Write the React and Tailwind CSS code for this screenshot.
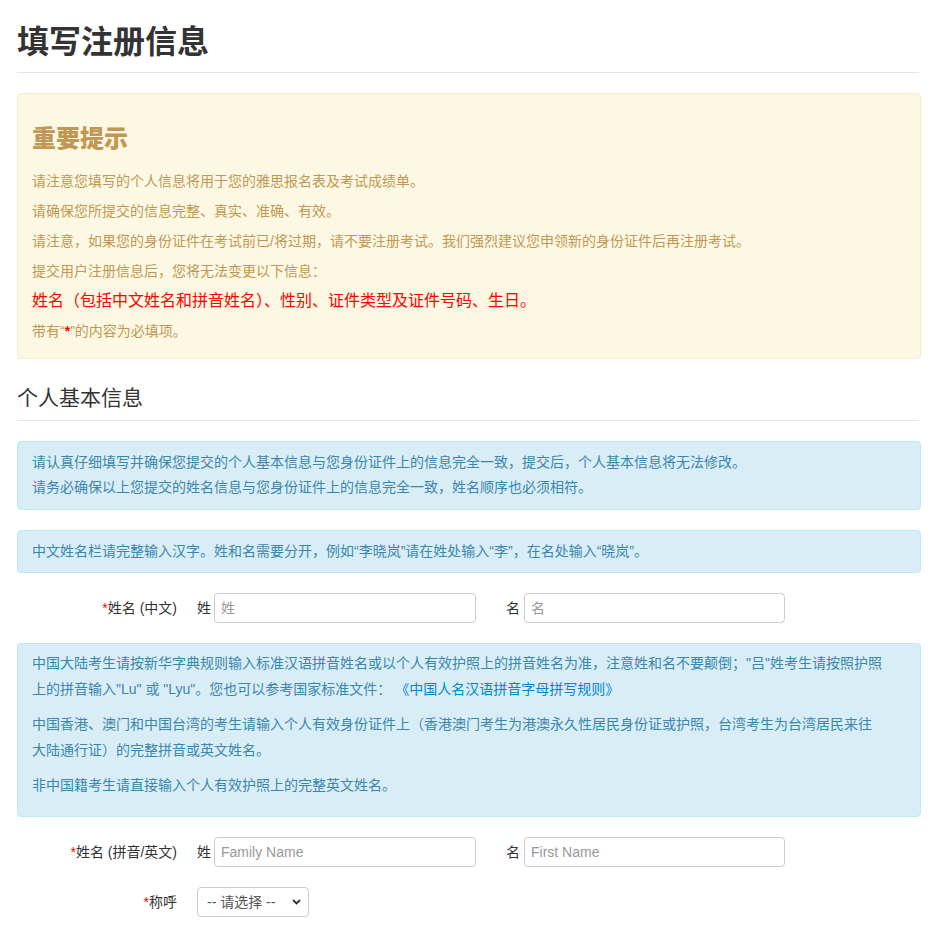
import React from "react";

const font = { fontFamily: '"Liberation Sans", "Noto Sans CJK SC", sans-serif' };

function Req() {
  return <span className="text-[#ff0000]">*</span>;
}

function NameRow({ label, family, first }) {
  return (
    <div className="flex items-center h-[30px] text-[14px] text-[#333]">
      <div className="w-[160px] text-right pr-0">
        <Req />
        {label}
      </div>
      <span className="ml-[20px] mr-[3px]">姓</span>
      <input
        className="w-[262px] h-[30px] border border-[#ccc] rounded-[4px] px-[6px] text-[14px] placeholder:text-[#999] outline-none"
        placeholder={family}
      />
      <span className="ml-[30px] mr-[4px]">名</span>
      <input
        className="w-[261px] h-[30px] border border-[#ccc] rounded-[4px] px-[6px] text-[14px] placeholder:text-[#999] outline-none"
        placeholder={first}
      />
    </div>
  );
}

export default function App() {
  return (
    <div className="min-h-screen bg-white px-[17px] pb-[20px] w-[936px]" style={font}>
      <h1 className="mt-[22px] text-[32px] leading-[40px] font-bold text-[#333] pb-[10px] border-b border-[#e5e5e5]">
        填写注册信息
      </h1>

      {/* 重要提示 */}
      <div className="mt-[20px] w-[904px] border border-[#faebcc] bg-[#fcf8e3] rounded-[4px] px-[14px] pt-[15px] pb-[7px] text-[#c09853] text-[14px]">
        <h3 className="mt-[17px] mb-[19px] text-[24px] leading-[26px] font-black">重要提示</h3>
        <p className="leading-[20px] mb-[10px]">请注意您填写的个人信息将用于您的雅思报名表及考试成绩单。</p>
        <p className="leading-[20px] mb-[10px]">请确保您所提交的信息完整、真实、准确、有效。</p>
        <p className="leading-[20px] mb-[10px]">
          请注意，如果您的身份证件在考试前已/将过期，请不要注册考试。我们强烈建议您申领新的身份证件后再注册考试。
        </p>
        <p className="leading-[20px] mb-[10px]">提交用户注册信息后，您将无法变更以下信息：</p>
        <p className="leading-[20px] mb-[10px] text-[16px] text-[#ff0000]">
          姓名（包括中文姓名和拼音姓名）、性别、证件类型及证件号码、生日。
        </p>
        <p className="leading-[20px] mb-[10px]">
          带有“<span className="text-[#ff0000] font-bold">*</span>”的内容为必填项。
        </p>
      </div>

      <h2 className="mt-[27px] text-[21px] leading-[24px] text-[#333] pb-[10px] border-b border-[#e5e5e5]">
        个人基本信息
      </h2>

      <div className="mt-[20px] w-[904px] border border-[#bce8f1] bg-[#d9edf7] rounded-[4px] pl-[14px] pr-[35px] pt-[8px] pb-[9px] text-[14px] leading-[25px] text-[#3a87ad]">
        请认真仔细填写并确保您提交的个人基本信息与您身份证件上的信息完全一致，提交后，个人基本信息将无法修改。
        <br />
        请务必确保以上您提交的姓名信息与您身份证件上的信息完全一致，姓名顺序也必须相符。
      </div>

      <div className="mt-[20px] w-[904px] border border-[#bce8f1] bg-[#d9edf7] rounded-[4px] pl-[14px] pr-[35px] pt-[8px] pb-[8px] text-[14px] leading-[25px] text-[#3a87ad]">
        中文姓名栏请完整输入汉字。姓和名需要分开，例如“李晓岚”请在姓处输入“李”，在名处输入“晓岚”。
      </div>

      <div className="mt-[20px]">
        <NameRow label="姓名 (中文)" family="姓" first="名" />
      </div>

      <div className="mt-[20px] w-[904px] border border-[#bce8f1] bg-[#d9edf7] rounded-[4px] pl-[14px] pr-[35px] pt-[6px] pb-[9px] text-[14px] leading-[26px] text-[#3a87ad]">
        <p className="mb-[9px]">
          中国大陆考生请按新华字典规则输入标准汉语拼音姓名或以个人有效护照上的拼音姓名为准，注意姓和名不要颠倒；"吕"姓考生请按照护照上的拼音输入"Lu" 或 "Lyu"。您也可以参考国家标准文件：{" "}
          <a href="#" className="text-[#0088cc]">《中国人名汉语拼音字母拼写规则》</a>
        </p>
        <p className="mb-[9px]">
          中国香港、澳门和中国台湾的考生请输入个人有效身份证件上（香港澳门考生为港澳永久性居民身份证或护照，台湾考生为台湾居民来往大陆通行证）的完整拼音或英文姓名。
        </p>
        <p className="mb-[9px]">非中国籍考生请直接输入个人有效护照上的完整英文姓名。</p>
      </div>

      <div className="mt-[20px]">
        <NameRow label="姓名 (拼音/英文)" family="Family Name" first="First Name" />
      </div>

      <div className="mt-[20px] flex items-center h-[30px] text-[14px] text-[#333]">
        <div className="w-[160px] text-right">
          <Req />
          称呼
        </div>
        <div className="relative ml-[20px] w-[112px] h-[30px]">
          <select className="appearance-none w-full h-full border border-[#ccc] rounded-[4px] pl-[9px] pr-[24px] text-[14px] text-[#555] bg-white outline-none">
            <option>-- 请选择 --</option>
            <option>先生</option>
            <option>女士</option>
          </select>
          <svg
            className="absolute right-[8px] top-[12px] pointer-events-none"
            width="9"
            height="6"
            viewBox="0 0 9 6"
          >
            <path d="M1 1l3.5 3.5L8 1" fill="none" stroke="#333" strokeWidth="1.8" />
          </svg>
        </div>
      </div>
    </div>
  );
}
